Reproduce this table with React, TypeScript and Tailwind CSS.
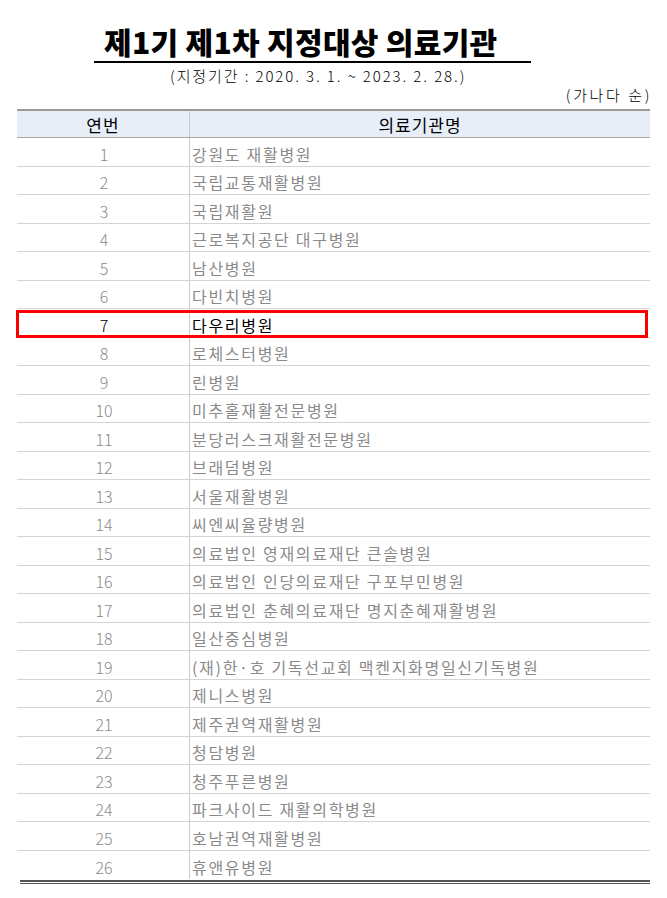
import React from "react";

const hospitals: string[] = [
  "강원도 재활병원",
  "국립교통재활병원",
  "국립재활원",
  "근로복지공단 대구병원",
  "남산병원",
  "다빈치병원",
  "다우리병원",
  "로체스터병원",
  "린병원",
  "미추홀재활전문병원",
  "분당러스크재활전문병원",
  "브래덤병원",
  "서울재활병원",
  "씨엔씨율량병원",
  "의료법인 영재의료재단 큰솔병원",
  "의료법인 인당의료재단 구포부민병원",
  "의료법인 춘혜의료재단 명지춘혜재활병원",
  "일산중심병원",
  "(재)한·호 기독선교회 맥켄지화명일신기독병원",
  "제니스병원",
  "제주권역재활병원",
  "청담병원",
  "청주푸른병원",
  "파크사이드 재활의학병원",
  "호남권역재활병원",
  "휴앤유병원",
];

// 강조 표시할 행 (연번 7)
const HIGHLIGHT = 7;

const App: React.FC = () => {
  return (
    <div
      className="w-[667px] h-[898px] bg-white overflow-hidden"
      style={{ fontFamily: '"Noto Sans CJK KR", "Liberation Sans", sans-serif' }}
    >
      {/* 제목 */}
      <div className="pt-[21px] pl-[104px]">
        <h1 className="text-[30px] leading-[40px] font-black text-black tracking-[0.3px]">
          제1기 제1차 지정대상 의료기관
        </h1>
      </div>
      <div className="ml-[94px] w-[437px] h-[2px] bg-black mt-[0px]" />
      <p className="pl-[170px] mt-[3px] text-[15px] leading-[20px] text-black font-light tracking-[1.9px]">
        (지정기간 : 2020. 3. 1. ~ 2023. 2. 28.)
      </p>
      <p className="pr-[15px] mt-[-1px] text-right text-[15px] leading-[20px] text-black font-light tracking-[2.6px]">
        (가나다 순)
      </p>

      {/* 표 */}
      <div className="mx-[17px] mt-[4px]">
        <div className="flex h-[29px] bg-[#e7eef8] border-t-2 border-[#9a9a9a] border-b border-b-[#a8a8a8] text-[17px] text-black tracking-[1px]">
          <div className="w-[173px] flex items-center justify-center border-r border-[#c8c8c8] pt-[2px]">
            연번
          </div>
          <div className="flex-1 flex items-center justify-center pt-[2px]">
            의료기관명
          </div>
        </div>

        {hospitals.map((name, i) => {
          const no = i + 1;
          const hl = no === HIGHLIGHT;
          return (
            <div
              key={no}
              className={`relative flex h-[28.5px] text-[16px] ${
                i < hospitals.length - 1 ? "border-b border-[#d4d4d4]" : ""
              } ${hl ? "text-black" : "text-[#8a8a8a]"}`}
            >
              <div className="w-[173px] flex items-center justify-center border-r border-[#c8c8c8] font-light pl-[2px] pt-[4px]">
                {no}
              </div>
              <div className="flex-1 flex items-center pl-[2px] pt-[4px] whitespace-nowrap tracking-[1.7px]">
                {name}
              </div>
              {hl && (
                <div className="absolute left-[-1px] right-[2px] top-[1px] bottom-[-1px] border-[3px] border-[#ff0000]" />
              )}
            </div>
          );
        })}

        <div className="ml-[3px] h-[2px] bg-[#555555] mt-[1px]" />
        <div className="ml-[3px] h-[1px] bg-[#555555] mt-[1px]" />
      </div>
    </div>
  );
};

export default App;
